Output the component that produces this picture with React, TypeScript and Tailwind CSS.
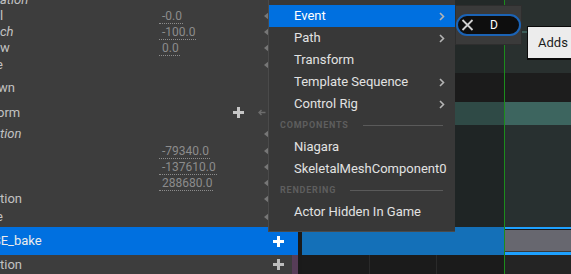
import React from 'react';

type Row = {
  h: string;
  label: string;
  italic?: boolean;
  shift?: string;
  value?: string;
  tri?: boolean;
  add?: boolean;
};

const rows: Row[] = [
  { h: 'h-[16px]', label: 'ation', italic: true },
  { h: 'h-[16px]', label: 'l', value: '-0.0', tri: true },
  { h: 'h-[16px]', label: 'ch', italic: true, value: '-100.0', tri: true },
  { h: 'h-[15px]', label: 'w', value: '0.0', tri: true },
  { h: 'h-[19px]', label: 'e', shift: '-ml-[4px]', tri: true },
  { h: 'h-[27px]', label: 'wn', shift: '-ml-[2px]' },
  { h: 'h-[23px]', label: 'orm', shift: '-ml-[3px]', add: true },
  { h: 'h-[19px]', label: 'tion', italic: true, tri: true },
  { h: 'h-[16px]', label: '', value: '-79340.0', tri: true },
  { h: 'h-[16px]', label: '', value: '-137610.0', tri: true },
  { h: 'h-[16px]', label: '', value: '288680.0', tri: true },
  { h: 'h-[16px]', label: 'tion', tri: true },
  { h: 'h-[20px]', label: 'e', shift: '-ml-[4px]', tri: true },
];

function Plus({ color }: { color: string }) {
  return (
    <svg width="11" height="11" viewBox="0 0 11 11">
      <path d="M4 0h3v4h4v3H7v4H4V7H0V4h4z" fill={color} />
    </svg>
  );
}

function Tri() {
  return (
    <svg width="5" height="8" viewBox="0 0 5 8">
      <path d="M0 4L5 0V8Z" fill="#777" />
    </svg>
  );
}

function Chevron() {
  return (
    <svg width="6" height="9" viewBox="0 0 6 9">
      <path d="M1 1l3.5 3.5L1 8" stroke="#b4b4b4" strokeWidth="1.6" fill="none" />
    </svg>
  );
}

const items: { kind: 'item' | 'head'; text: string; sub?: boolean; active?: boolean }[] = [
  { kind: 'item', text: 'Event', sub: true, active: true },
  { kind: 'item', text: 'Path', sub: true },
  { kind: 'item', text: 'Transform' },
  { kind: 'item', text: 'Template Sequence', sub: true },
  { kind: 'item', text: 'Control Rig', sub: true },
  { kind: 'head', text: 'COMPONENTS' },
  { kind: 'item', text: 'Niagara' },
  { kind: 'item', text: 'SkeletalMeshComponent0' },
  { kind: 'head', text: 'RENDERING' },
  { kind: 'item', text: 'Actor Hidden In Game' },
];

export default function App() {
  return (
    <div className="relative w-[571px] h-[274px] overflow-hidden flex bg-[#1c1c1c] font-[Roboto,'Liberation_Sans',sans-serif]">
      {/* Outliner */}
      <div className="w-[298px] flex flex-col bg-[#3d3d3d] text-[13px] text-[#c2c2c2]">
        <div className="-mt-[8px]" />
        {rows.map((r, i) => (
          <div key={i} className={`${r.h} flex items-center shrink-0`}>
            <div className="w-[159px] overflow-hidden whitespace-nowrap">
              <span className={`${r.italic ? 'italic' : ''} ${r.shift ?? ''} inline-block`}>{r.label}</span>
            </div>
            <div className="flex-1 text-[12px] text-[#8c8c8c]">
              {r.value && (
                <span className="border-b border-dotted border-[#8c8c8c] pl-[3px] pr-[1px] leading-[13px] inline-block">
                  {r.value}
                </span>
              )}
            </div>
            <div className="w-[70px] h-full flex items-center">
              {r.tri && (
                <div className="ml-[36px]">
                  <Tri />
                </div>
              )}
              {r.add && (
                <>
                  <div className="ml-[5px]">
                    <Plus color="#c6c6c6" />
                  </div>
                  <svg className="ml-[14px]" width="8" height="7" viewBox="0 0 8 7">
                    <path d="M7.5 3.5H1M3.5 1L1 3.5 3.5 6" stroke="#6c6c6c" strokeWidth="1.4" fill="none" />
                  </svg>
                </>
              )}
            </div>
          </div>
        ))}
        <div className="h-[28px] shrink-0 flex items-center bg-[#0070e0] text-[#ececec]">
          <div className="w-[159px] overflow-hidden whitespace-nowrap">
            <span className="-ml-[7px] inline-block">SE_bake</span>
          </div>
          <div className="flex-1" />
          <div className="w-[70px] flex items-center">
            <div className="ml-[45px]">
              <Plus color="#ffffff" />
            </div>
          </div>
        </div>
        <div className="flex-1 flex items-center">
          <div className="w-[159px] overflow-hidden whitespace-nowrap">tion</div>
          <div className="flex-1" />
          <div className="w-[70px] h-full flex items-center">
            <div className="ml-[45px]">
              <Plus color="#bdbdbd" />
            </div>
            <div className="ml-[8px] w-[6px] h-full bg-[#573d58]" />
          </div>
        </div>
      </div>

      <div className="w-[4px] bg-[#1a1a1a]" />

      {/* Timeline */}
      <div className="relative flex-1 flex flex-col">
        <div className="h-[73px] flex">
          <div className="w-[202px] bg-[#232928]" />
          <div className="flex-1 bg-[#29302f]" />
        </div>
        <div className="h-[29px] flex">
          <div className="w-[202px] bg-[#1b1b1b]" />
          <div className="flex-1 bg-[#1d1d1d]" />
        </div>
        <div className="h-[23px] flex">
          <div className="w-[202px] bg-[#2f4a46]" />
          <div className="flex-1 bg-[#3d655f]" />
        </div>
        <div className="h-[102px] flex">
          <div className="w-[202px] bg-[#1f2525]" />
          <div className="flex-1 bg-[#283030]" />
        </div>
        <div className="h-[28px] flex">
          <div className="w-[202px] bg-[#1470b8]" />
          <div className="flex-1 flex flex-col">
            <div className="h-[2px] bg-[#1ea1ff]" />
            <div className="h-px bg-[#1a1a1a]" />
            <div className="flex-1 bg-[#67676f]" />
            <div className="h-px bg-[#3a3a3a]" />
            <div className="h-[3px] bg-[#1ea1ff]" />
          </div>
        </div>
        <div className="flex-1 flex">
          <div className="w-[67px] bg-[#1b1b1b]" />
          <div className="w-px bg-[#2a2a2a]" />
          <div className="w-[66px] bg-[#1b1b1b]" />
          <div className="w-px bg-[#2a2a2a]" />
          <div className="w-[67px] bg-[#1b1b1b]" />
          <div className="flex-1 bg-[#242424]" />
        </div>
        {/* playhead */}
        <div className="absolute left-[202px] top-0 bottom-0 w-px bg-[#1c8c1c]" />
        <div className="absolute left-[220px] top-[31px] w-[8px] h-[2px] bg-[#3b5c57]" />
      </div>

      {/* Context menu */}
      <div className="absolute left-[268px] top-0 w-[187px] h-[232px] bg-[#383838] border-l border-b border-[#4a4a4a] pt-[5px] flex flex-col">
        {items.map((it) =>
          it.kind === 'head' ? (
            <div key={it.text} className="h-[21px] flex items-center pl-[11px] pr-[12px]">
              <span className="text-[9px] font-bold tracking-[0.8px] text-[#5e5e5e]">{it.text}</span>
              <div className="flex-1 ml-[14px] h-px bg-[#5a5a5a]" />
            </div>
          ) : (
            <div
              key={it.text}
              className={`h-[22px] flex items-center pl-[25px] pr-[10px] text-[13px] ${
                it.active ? 'bg-[#0070e0] text-white' : 'text-[#e2e2e2]'
              }`}
            >
              <span className="flex-1">{it.text}</span>
              {it.sub && <Chevron />}
            </div>
          )
        )}
      </div>

      {/* Event submenu with search pill */}
      <div className="absolute left-[455px] top-[5px] w-[67px] h-[40px] bg-[#3a3a3a] border border-[#2e2e2e] flex items-center justify-center">
        <div className="w-[65px] h-[22px] rounded-full bg-[#0e0e0e] border-2 border-[#1b63b5] flex items-center pl-[3px]">
          <svg width="13" height="12" viewBox="0 0 13 12">
            <path d="M1.5 1l10 10M11.5 1l-10 10" stroke="#d0d0d0" strokeWidth="1.8" />
          </svg>
          <span className="ml-[16px] text-[12px] text-white">D</span>
        </div>
      </div>

      {/* Tooltip */}
      <div className="absolute left-[527px] top-[26px] h-[34px] bg-[#ececec] border border-[#0a0a0a] border-b-2 flex items-center pl-[10px] pr-[10px] text-[13px] text-[#1b1b1b] whitespace-nowrap">
        Adds an Event track
      </div>
    </div>
  );
}
